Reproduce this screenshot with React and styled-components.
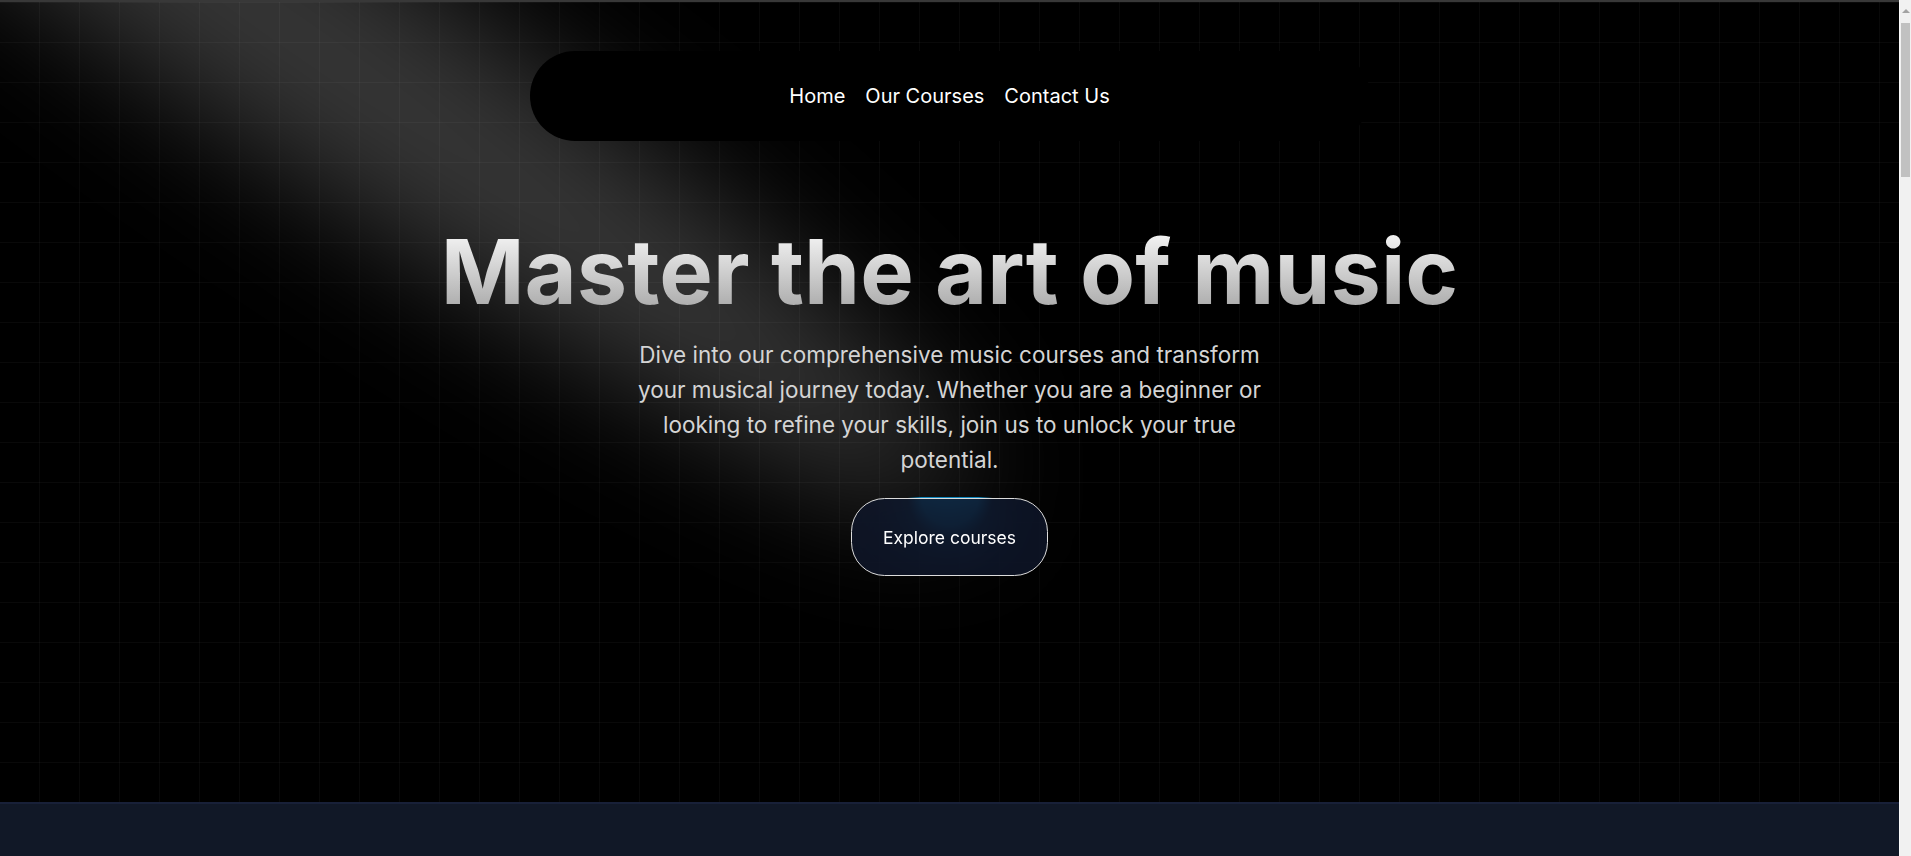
import React from "react";
import styled, { createGlobalStyle } from "styled-components";

const GlobalStyle = createGlobalStyle`
  html, body {
    margin: 0;
    padding: 0;
    background: #000;
  }
  html::-webkit-scrollbar {
    display: none;
  }
  html {
    scrollbar-width: none;
  }
  body {
    font-family: Inter, "Noto Sans", "Liberation Sans", sans-serif;
    color: #fff;
    -webkit-font-smoothing: antialiased;
  }
  * { box-sizing: border-box; }
`;

const Page = styled.div`
  width: calc(100% - 12px);
  border-top: 2px solid #383838;
  background-color: #000;
  background-image:
    linear-gradient(to right, transparent 39px, rgba(255, 255, 255, 0.035) 39px),
    linear-gradient(to bottom, rgba(255, 255, 255, 0.035) 1px, transparent 1px);
  background-size: 40px 40px;
`;

const ScrollTrack = styled.div`
  position: fixed;
  top: 0;
  right: 0;
  width: 12px;
  height: 100vh;
  background: #f1f1f1;
  border-left: 1px solid #fafafa;
  z-index: 100;
`;

const ScrollArrowUp = styled.div`
  position: absolute;
  top: 9px;
  left: 2px;
  width: 0;
  height: 0;
  border-left: 4px solid transparent;
  border-right: 4px solid transparent;
  border-bottom: 4px solid #a3a3a3;
`;

const ScrollThumb = styled.div`
  position: absolute;
  top: 23px;
  left: 1px;
  right: 1px;
  height: 154px;
  background: #c1c1c1;
`;

const NavBar = styled.nav`
  position: fixed;
  top: 51px;
  left: 0;
  right: 12px;
  max-width: 840px;
  margin: 0 auto;
  z-index: 50;
`;

const Menu = styled.div`
  display: flex;
  justify-content: center;
  gap: 20px;
  padding: 30px 40px;
  border-radius: 9999px;
  background: #000;
`;

const MenuItem = styled.a`
  color: #fff;
  font-size: 20px;
  line-height: 30px;
  text-decoration: none;
  cursor: pointer;
`;

const Hero = styled.section`
  position: relative;
  height: 800px;
  width: 100%;
  display: flex;
  flex-direction: column;
  align-items: center;
  justify-content: center;
  overflow: hidden;
`;

const SpotlightSvg = styled.svg`
  position: absolute;
  z-index: 1;
  pointer-events: none;
  top: -100px;
  left: 300px;
  width: 84%;
  height: 169%;
  transform: translate(-50%, -40%);
`;

const Content = styled.div`
  position: relative;
  z-index: 10;
  width: 100%;
  padding: 20px;
  text-align: center;
`;

const Title = styled.h1`
  margin: 0;
  font-size: 90px;
  line-height: 1;
  font-weight: 700;
  background: linear-gradient(to bottom, #fafafa, #a3a3a3);
  -webkit-background-clip: text;
  background-clip: text;
  color: transparent;
`;

const Lead = styled.p`
  margin: 20px auto 0;
  max-width: 640px;
  font-size: 22.5px;
  line-height: 35px;
  font-weight: 400;
  color: #d4d4d4;
`;

const ButtonRow = styled.div`
  margin-top: 20px;
`;

const MovingBorderButton = styled.a`
  position: relative;
  display: inline-block;
  width: 200px;
  height: 80px;
  padding: 1.25px;
  border-radius: 35px;
  overflow: hidden;
  background: transparent;
  text-decoration: none;
  vertical-align: top;
`;

const Glow = styled.div`
  position: absolute;
  left: 50%;
  top: 0;
  width: 100px;
  height: 100px;
  transform: translate(-50%, -50%);
  background: radial-gradient(#0ea5e9 40%, transparent 60%);
  opacity: 0.8;
`;

const ButtonFace = styled.div`
  position: relative;
  width: 100%;
  height: 100%;
  display: flex;
  align-items: center;
  justify-content: center;
  border: 1.25px solid #dcdcdc;
  border-radius: 33.6px;
  background: rgba(15, 23, 42, 0.8);
  backdrop-filter: blur(30px);
  color: #fff;
  font-size: 17.5px;
`;

const Featured = styled.section`
  background: #111827;
  border-top: 2px solid #182038;
  min-height: 3736px;
  padding: 60px 0;
`;

const Spotlight = () => (
  <SpotlightSvg viewBox="0 0 3787 2842" fill="none">
    <g filter="url(#spotlight-blur)">
      <ellipse
        cx="1924.71"
        cy="273.501"
        rx="1924.71"
        ry="273.501"
        transform="matrix(-0.822377 -0.568943 -0.568943 0.822377 3631.88 2291.09)"
        fill="white"
        fillOpacity="0.21"
      />
    </g>
    <defs>
      <filter
        id="spotlight-blur"
        x="0.860352"
        y="0.838989"
        width="3785.16"
        height="2840.26"
        filterUnits="userSpaceOnUse"
        colorInterpolationFilters="sRGB"
      >
        <feFlood floodOpacity="0" result="BackgroundImageFix" />
        <feBlend mode="normal" in="SourceGraphic" in2="BackgroundImageFix" result="shape" />
        <feGaussianBlur stdDeviation="151" result="blur" />
      </filter>
    </defs>
  </SpotlightSvg>
);

export default function App() {
  return (
    <>
      <GlobalStyle />
      <ScrollTrack>
        <ScrollArrowUp />
        <ScrollThumb />
      </ScrollTrack>
      <Page>
        <NavBar>
          <Menu>
            <MenuItem>Home</MenuItem>
            <MenuItem>Our Courses</MenuItem>
            <MenuItem>Contact Us</MenuItem>
          </Menu>
        </NavBar>
        <Hero>
          <Spotlight />
          <Content>
            <Title>Master the art of music</Title>
            <Lead>
              Dive into our comprehensive music courses and transform your musical
              journey today. Whether you are a beginner or looking to refine your
              skills, join us to unlock your true potential.
            </Lead>
            <ButtonRow>
              <MovingBorderButton>
                <Glow />
                <ButtonFace>Explore courses</ButtonFace>
              </MovingBorderButton>
            </ButtonRow>
          </Content>
        </Hero>
        <Featured />
      </Page>
    </>
  );
}
